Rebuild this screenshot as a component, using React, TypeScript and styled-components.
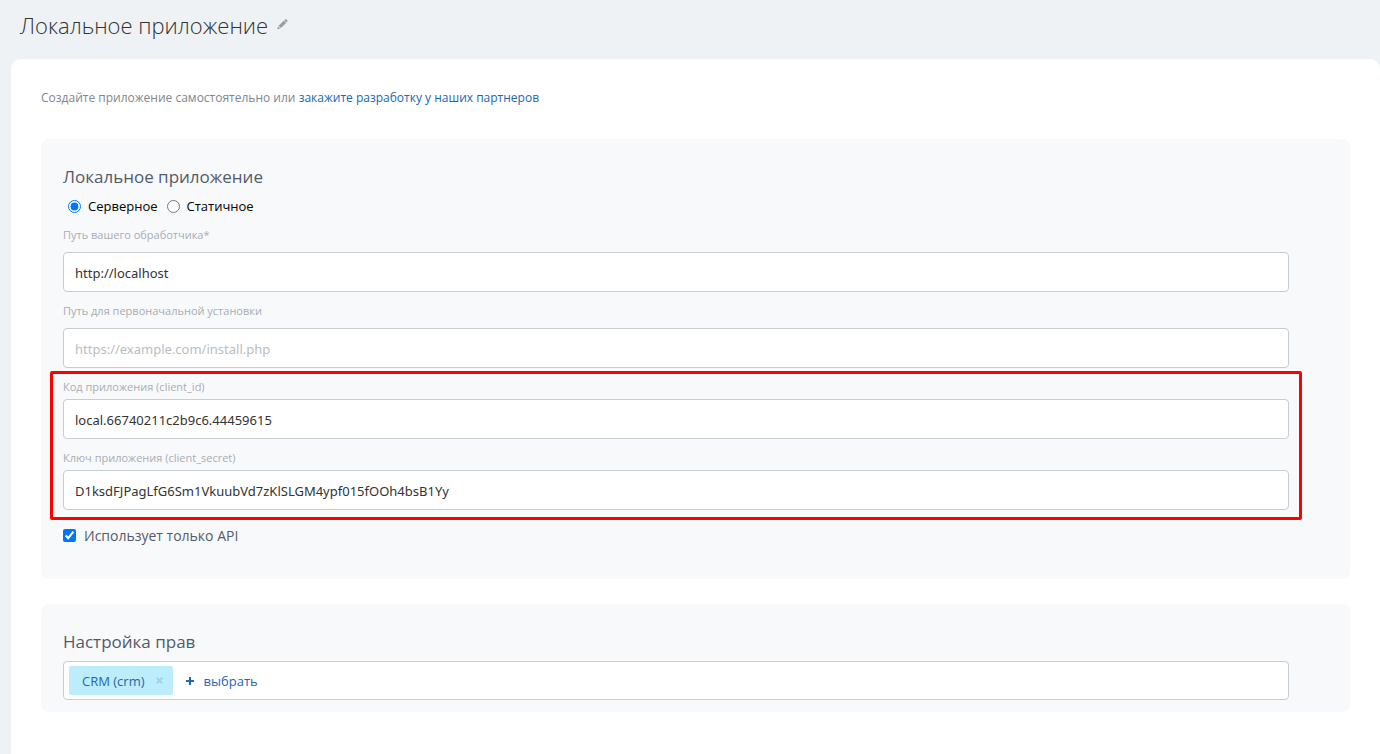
import React from "react";
import styled, { createGlobalStyle } from "styled-components";

const GlobalStyle = createGlobalStyle`
  * { box-sizing: border-box; }
  html, body, #root { height: 100%; }
  body {
    margin: 0;
    background: #eef2f4;
    color: #333;
    font-family: "Open Sans", "Noto Sans", sans-serif;
    font-size: 13px;
  }
`;

const Page = styled.div`
  min-height: 100%;
  display: flex;
  flex-direction: column;
`;

const Header = styled.header`
  display: flex;
  align-items: center;
  gap: 9px;
  height: 59px;
  padding: 0 20px 10px;
`;

const Title = styled.h1`
  margin: 0;
  font-size: 22px;
  line-height: 32px;
  font-weight: 300;
  color: #333;
`;

const EditButton = styled.button`
  display: flex;
  padding: 0;
  border: 0;
  background: none;
  cursor: pointer;
`;

const Panel = styled.main`
  flex: 1;
  margin-left: 11px;
  padding: 29px 30px 40px;
  border-radius: 10px 10px 0 0;
  background: #fff;
`;

const Intro = styled.p`
  margin: 0 0 31px;
  font-size: 12px;
  line-height: 20px;
  color: #80868e;
`;

const Link = styled.a`
  color: #2067b0;
  text-decoration: none;
`;

const Card = styled.section<{ $bottom: number }>`
  margin-bottom: 25px;
  padding: 24px 61px ${(p) => p.$bottom}px 22px;
  border-radius: 8px;
  background: #f8f9fb;
`;

const CardTitle = styled.h2`
  margin: 0;
  font-size: 17px;
  line-height: 28px;
  font-weight: 400;
  color: #525c69;
`;

const RadioRow = styled.div`
  display: flex;
  align-items: center;
  gap: 9px;
  height: 30px;
  margin-bottom: 5px;
  padding-left: 5px;
`;

const RadioLabel = styled.label`
  display: flex;
  align-items: center;
  gap: 7px;
  font-size: 13px;
  line-height: 20px;
  color: #000;
`;

const Tick = styled.input`
  flex: none;
  width: 13px;
  height: 13px;
  margin: 0;
`;

const Field = styled.div<{ $gap: number }>`
  display: flex;
  flex-direction: column;
  gap: ${(p) => p.$gap}px;
  margin-bottom: 10px;
`;

const FieldLabel = styled.label`
  font-size: 11px;
  line-height: 18px;
  color: #a8adb4;
`;

const TextInput = styled.input`
  width: 100%;
  height: 40px;
  padding: 2px 11px 0;
  border: 1px solid #c6cdd3;
  border-radius: 4px;
  background: #fff;
  color: #333;
  font-family: "Noto Sans", sans-serif;
  font-size: 13px;
  outline: none;
  &::placeholder { color: #b9bdc2; opacity: 1; }
`;

const Credentials = styled.div`
  position: relative;
`;

const Highlight = styled.div`
  position: absolute;
  inset: -7px -13px -10px;
  border: 3px solid #f00;
  border-radius: 2px;
  pointer-events: none;
`;

const CheckLabel = styled.label`
  display: flex;
  align-items: center;
  gap: 8px;
  height: 30px;
  font-size: 14px;
  color: #525c69;
`;

const TagBox = styled.div`
  display: flex;
  align-items: center;
  gap: 13px;
  height: 39px;
  margin-top: 5px;
  padding: 0 5px;
  border: 1px solid #c6cdd3;
  border-radius: 4px;
  background: #fff;
`;

const Tag = styled.span`
  display: flex;
  align-items: center;
  gap: 11px;
  height: 29px;
  padding: 0 10px 0 13px;
  border-radius: 2px;
  background: #bcedfc;
  color: #1f67b0;
  font-size: 13px;
  font-weight: 500;
`;

const AddButton = styled.button`
  display: flex;
  align-items: center;
  gap: 10px;
  padding: 0;
  border: 0;
  background: none;
  color: #1f67b0;
  font-family: inherit;
  font-size: 13px;
  font-weight: 500;
  cursor: pointer;
`;

type TextFieldProps = {
  id: string;
  label: string;
  gap: number;
  value?: string;
  placeholder?: string;
};

const TextField = ({ id, label, gap, value, placeholder }: TextFieldProps) => (
  <Field $gap={gap}>
    <FieldLabel htmlFor={id}>{label}</FieldLabel>
    <TextInput id={id} type="text" defaultValue={value} placeholder={placeholder} />
  </Field>
);

const PencilIcon = () => (
  <svg width="11" height="11" viewBox="0 0 11 11" fill="#959ca4" aria-hidden="true">
    <path d="M7.6.9Q8.6-.2 9.6.6l.5.5q.8.9-.2 1.9l-.4.4L7.1 1.4zM6.7 1.7l2.4 2.2-5.2 5-2.3-2.2zM1.1 7.3l2.2 2.1-3.1.9z" />
  </svg>
);

const CrossIcon = () => (
  <svg width="7" height="7" viewBox="0 0 7 7" stroke="#a0d2ee" strokeWidth="2" aria-hidden="true">
    <path d="M.7.7l5.6 5.6M6.3.7.7 6.3" />
  </svg>
);

const PlusIcon = () => (
  <svg width="8" height="8" viewBox="0 0 8 8" fill="#1f67b0" aria-hidden="true">
    <path d="M3 0h2v3h3v2H5v3H3V5H0V3h3z" />
  </svg>
);

export default function App() {
  return (
    <>
      <GlobalStyle />
      <Page>
        <Header>
          <Title>Локальное приложение</Title>
          <EditButton type="button" aria-label="Изменить название">
            <PencilIcon />
          </EditButton>
        </Header>
        <Panel>
          <Intro>
            Создайте приложение самостоятельно или{" "}
            <Link href="#partners">закажите разработку у наших партнеров</Link>
          </Intro>
          <Card $bottom={29}>
            <CardTitle>Локальное приложение</CardTitle>
            <RadioRow>
              <RadioLabel>
                <Tick type="radio" name="kind" defaultChecked />
                Серверное
              </RadioLabel>
              <RadioLabel>
                <Tick type="radio" name="kind" />
                Статичное
              </RadioLabel>
            </RadioRow>
            <TextField id="handler" gap={8} label="Путь вашего обработчика*" value="http://localhost" />
            <TextField
              id="install"
              gap={8}
              label="Путь для первоначальной установки"
              placeholder="https://example.com/install.php"
            />
            <Credentials>
              <TextField id="client-id" gap={3} label="Код приложения (client_id)" value="local.66740211c2b9c6.44459615" />
              <TextField
                id="client-secret"
                gap={3}
                label="Ключ приложения (client_secret)"
                value="D1ksdFJPagLfG6Sm1VkuubVd7zKlSLGM4ypf015fOOh4bsB1Yy"
              />
              <Highlight />
            </Credentials>
            <CheckLabel>
              <Tick type="checkbox" defaultChecked />
              Использует только API
            </CheckLabel>
          </Card>
          <Card $bottom={12}>
            <CardTitle>Настройка прав</CardTitle>
            <TagBox>
              <Tag>
                CRM (crm)
                <EditButton type="button" aria-label="Удалить CRM (crm)">
                  <CrossIcon />
                </EditButton>
              </Tag>
              <AddButton type="button">
                <PlusIcon />
                выбрать
              </AddButton>
            </TagBox>
          </Card>
        </Panel>
      </Page>
    </>
  );
}
